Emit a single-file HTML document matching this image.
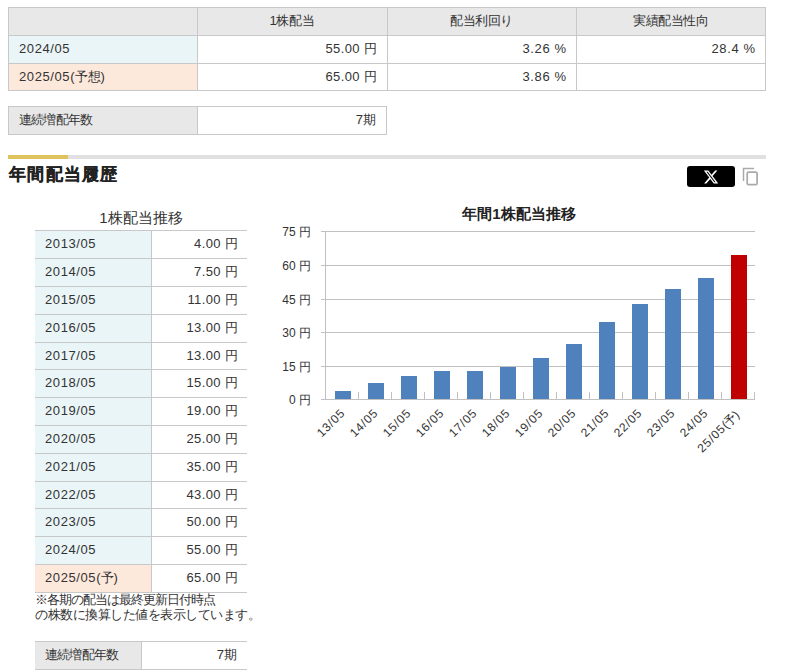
<!DOCTYPE html>
<html><head><meta charset="utf-8">
<style>
html,body{margin:0;padding:0;background:#fff;}
body{width:788px;height:672px;overflow:hidden;position:relative;font-family:"Liberation Sans",sans-serif;color:#333;font-size:13px;}
.a{position:absolute;}
.bx{position:absolute;box-sizing:border-box;}
.t{position:absolute;white-space:nowrap;line-height:16px;}
.r{text-align:right;}
.c{text-align:center;}
.n{letter-spacing:0.6px;}
.n4{letter-spacing:0.4px;}
.xl{transform-origin:100% 0;transform:rotate(-45deg);}
.hl{position:absolute;height:1px;background:#c8c8c8;}
.vl{position:absolute;width:1px;background:#c8c8c8;}
</style></head><body>

<!-- top table -->
<div class="a" style="left:8px;top:7px;width:758px;height:28px;background:#e8e8e8"></div>
<div class="a" style="left:8px;top:35px;width:189px;height:28px;background:#eaf5f8"></div>
<div class="a" style="left:8px;top:63px;width:189px;height:27px;background:#fde9dc"></div>
<div class="hl" style="left:8px;top:7px;width:758px"></div>
<div class="hl" style="left:8px;top:35px;width:758px"></div>
<div class="hl" style="left:8px;top:63px;width:758px"></div>
<div class="hl" style="left:8px;top:90px;width:758px"></div>
<div class="vl" style="left:8px;top:7px;height:84px"></div>
<div class="vl" style="left:197px;top:7px;height:84px"></div>
<div class="vl" style="left:387px;top:7px;height:84px"></div>
<div class="vl" style="left:576px;top:7px;height:84px"></div>
<div class="vl" style="left:765px;top:7px;height:84px"></div>
<div class="t c" style="left:197px;top:13px;width:190px"><span style="letter-spacing:-0.3px">1株配当</span></div>
<div class="t c" style="left:387px;top:13px;width:189px"><span style="letter-spacing:-0.5px">配当利回り</span></div>
<div class="t c" style="left:576px;top:13px;width:189px"><span style="letter-spacing:-0.5px">実績配当性向</span></div>
<div class="t" style="left:19px;top:41px"><span class="n">2024/05</span></div>
<div class="t" style="left:19px;top:69px"><span class="n">2025/05</span>(予想)</div>
<div class="t r" style="left:197px;top:41px;width:180px"><span class="n4">55.00 </span>円</div>
<div class="t r" style="left:387px;top:41px;width:179px"><span class="n">3.26 </span>%</div>
<div class="t r" style="left:576px;top:41px;width:179px"><span class="n">28.4 </span>%</div>
<div class="t r" style="left:197px;top:69px;width:180px"><span class="n4">65.00 </span>円</div>
<div class="t r" style="left:387px;top:69px;width:179px"><span class="n">3.86 </span>%</div>

<!-- second table -->
<div class="a" style="left:8px;top:106px;width:189px;height:28px;background:#e8e8e8"></div>
<div class="hl" style="left:8px;top:106px;width:379px"></div>
<div class="hl" style="left:8px;top:134px;width:379px"></div>
<div class="vl" style="left:8px;top:106px;height:29px"></div>
<div class="vl" style="left:197px;top:106px;height:29px"></div>
<div class="vl" style="left:386px;top:106px;height:29px"></div>
<div class="t" style="left:19px;top:112px;letter-spacing:-0.8px">連続増配年数</div>
<div class="t r" style="left:197px;top:112px;width:179px">7期</div>

<!-- divider -->
<div class="a" style="left:8px;top:155px;width:758px;height:4px;background:#e0e0e0"></div>
<div class="a" style="left:8px;top:155px;width:60px;height:4px;background:#dfc35e"></div>
<div class="t" style="left:9px;top:165px;font-size:17px;line-height:20px;font-weight:bold;color:#222;letter-spacing:1.3px;-webkit-text-stroke:0.25px #222">年間配当履歴</div>

<!-- X button -->
<div class="a" style="left:687px;top:166px;width:48px;height:21px;background:#000;border-radius:3px"></div>
<svg class="a" style="left:703px;top:169px" width="16" height="16" viewBox="0 0 24 24"><path fill="#fff" d="M18.244 2.25h3.308l-7.227 8.26 8.502 11.24H16.17l-5.214-6.817L4.99 21.75H1.68l7.73-8.835L1.254 2.25H8.08l4.713 6.231zm-1.161 17.52h1.833L7.084 4.126H5.117z"/></svg>
<svg class="a" style="left:742px;top:167px" width="18" height="20" viewBox="0 0 18 20"><path d="M1.5 14V1.5H12" fill="none" stroke="#aaa" stroke-width="1.5"/><rect x="5.2" y="5.2" width="9.9" height="12.5" rx="1.4" fill="none" stroke="#aaa" stroke-width="1.75"/></svg>

<div id="left"><div class="t c" style="left:35px;top:209px;width:212px;font-size:15px;line-height:18px">1株配当推移</div>
<div class="a" style="left:35px;top:231px;width:116px;height:27px;background:#eaf5f8"></div>
<div class="a" style="left:35px;top:259px;width:116px;height:27px;background:#eaf5f8"></div>
<div class="a" style="left:35px;top:287px;width:116px;height:27px;background:#eaf5f8"></div>
<div class="a" style="left:35px;top:315px;width:116px;height:27px;background:#eaf5f8"></div>
<div class="a" style="left:35px;top:343px;width:116px;height:26px;background:#eaf5f8"></div>
<div class="a" style="left:35px;top:370px;width:116px;height:27px;background:#eaf5f8"></div>
<div class="a" style="left:35px;top:398px;width:116px;height:27px;background:#eaf5f8"></div>
<div class="a" style="left:35px;top:426px;width:116px;height:27px;background:#eaf5f8"></div>
<div class="a" style="left:35px;top:454px;width:116px;height:27px;background:#eaf5f8"></div>
<div class="a" style="left:35px;top:482px;width:116px;height:26px;background:#eaf5f8"></div>
<div class="a" style="left:35px;top:509px;width:116px;height:27px;background:#eaf5f8"></div>
<div class="a" style="left:35px;top:537px;width:116px;height:27px;background:#eaf5f8"></div>
<div class="a" style="left:35px;top:565px;width:116px;height:27px;background:#fde9dc"></div>
<div class="hl" style="left:35px;top:230px;width:212px"></div>
<div class="hl" style="left:35px;top:258px;width:212px"></div>
<div class="hl" style="left:35px;top:286px;width:212px"></div>
<div class="hl" style="left:35px;top:314px;width:212px"></div>
<div class="hl" style="left:35px;top:342px;width:212px"></div>
<div class="hl" style="left:35px;top:369px;width:212px"></div>
<div class="hl" style="left:35px;top:397px;width:212px"></div>
<div class="hl" style="left:35px;top:425px;width:212px"></div>
<div class="hl" style="left:35px;top:453px;width:212px"></div>
<div class="hl" style="left:35px;top:481px;width:212px"></div>
<div class="hl" style="left:35px;top:508px;width:212px"></div>
<div class="hl" style="left:35px;top:536px;width:212px"></div>
<div class="hl" style="left:35px;top:564px;width:212px"></div>
<div class="hl" style="left:35px;top:592px;width:212px"></div>
<div class="vl" style="left:151px;top:230px;height:362px"></div>
<div class="t" style="left:45px;top:235.50px"><span class="n">2013/05</span></div>
<div class="t r" style="left:152px;top:235.50px;width:86px"><span class="n4">4.00 </span>円</div>
<div class="t" style="left:45px;top:263.50px"><span class="n">2014/05</span></div>
<div class="t r" style="left:152px;top:263.50px;width:86px"><span class="n4">7.50 </span>円</div>
<div class="t" style="left:45px;top:291.50px"><span class="n">2015/05</span></div>
<div class="t r" style="left:152px;top:291.50px;width:86px"><span class="n4">11.00 </span>円</div>
<div class="t" style="left:45px;top:319.50px"><span class="n">2016/05</span></div>
<div class="t r" style="left:152px;top:319.50px;width:86px"><span class="n4">13.00 </span>円</div>
<div class="t" style="left:45px;top:347.50px"><span class="n">2017/05</span></div>
<div class="t r" style="left:152px;top:347.50px;width:86px"><span class="n4">13.00 </span>円</div>
<div class="t" style="left:45px;top:374.50px"><span class="n">2018/05</span></div>
<div class="t r" style="left:152px;top:374.50px;width:86px"><span class="n4">15.00 </span>円</div>
<div class="t" style="left:45px;top:402.50px"><span class="n">2019/05</span></div>
<div class="t r" style="left:152px;top:402.50px;width:86px"><span class="n4">19.00 </span>円</div>
<div class="t" style="left:45px;top:430.50px"><span class="n">2020/05</span></div>
<div class="t r" style="left:152px;top:430.50px;width:86px"><span class="n4">25.00 </span>円</div>
<div class="t" style="left:45px;top:458.50px"><span class="n">2021/05</span></div>
<div class="t r" style="left:152px;top:458.50px;width:86px"><span class="n4">35.00 </span>円</div>
<div class="t" style="left:45px;top:486.50px"><span class="n">2022/05</span></div>
<div class="t r" style="left:152px;top:486.50px;width:86px"><span class="n4">43.00 </span>円</div>
<div class="t" style="left:45px;top:513.50px"><span class="n">2023/05</span></div>
<div class="t r" style="left:152px;top:513.50px;width:86px"><span class="n4">50.00 </span>円</div>
<div class="t" style="left:45px;top:541.50px"><span class="n">2024/05</span></div>
<div class="t r" style="left:152px;top:541.50px;width:86px"><span class="n4">55.00 </span>円</div>
<div class="t" style="left:45px;top:569.50px"><span class="n">2025/05</span>(予)</div>
<div class="t r" style="left:152px;top:569.50px;width:86px"><span class="n4">65.00 </span>円</div>
<div class="t" style="left:35px;top:592px;line-height:15px"><span style="letter-spacing:-1px">※各期の配当は最終更新日付時点</span><br><span style="letter-spacing:-0.5px">の株数に換算した値を表示しています。</span></div>
<div class="a" style="left:35px;top:642px;width:106px;height:27px;background:#e8e8e8"></div>
<div class="hl" style="left:35px;top:641px;width:212px"></div>
<div class="hl" style="left:35px;top:669px;width:212px"></div>
<div class="vl" style="left:141px;top:641px;height:29px"></div>
<div class="t" style="left:45px;top:647px;letter-spacing:-0.8px">連続増配年数</div>
<div class="t r" style="left:142px;top:647px;width:95px">7期</div></div><!--/left-->
<div id="chart"><svg class="a" style="left:0;top:0" width="788" height="672">
<line x1="321" y1="366.5" x2="755" y2="366.5" stroke="#c0c0c0" stroke-width="1"/>
<line x1="321" y1="332.5" x2="755" y2="332.5" stroke="#c0c0c0" stroke-width="1"/>
<line x1="321" y1="299.5" x2="755" y2="299.5" stroke="#c0c0c0" stroke-width="1"/>
<line x1="321" y1="265.5" x2="755" y2="265.5" stroke="#c0c0c0" stroke-width="1"/>
<line x1="321" y1="231.5" x2="755" y2="231.5" stroke="#c0c0c0" stroke-width="1"/>
<rect x="335" y="391.0" width="16" height="8.5" fill="#4f81bd"/>
<rect x="368" y="383.0" width="16" height="16.5" fill="#4f81bd"/>
<rect x="401" y="376.0" width="16" height="23.5" fill="#4f81bd"/>
<rect x="434" y="371.0" width="16" height="28.5" fill="#4f81bd"/>
<rect x="467" y="371.0" width="16" height="28.5" fill="#4f81bd"/>
<rect x="500" y="367.0" width="16" height="32.5" fill="#4f81bd"/>
<rect x="533" y="358.0" width="16" height="41.5" fill="#4f81bd"/>
<rect x="566" y="344.0" width="16" height="55.5" fill="#4f81bd"/>
<rect x="599" y="322.0" width="16" height="77.5" fill="#4f81bd"/>
<rect x="632" y="304.0" width="16" height="95.5" fill="#4f81bd"/>
<rect x="665" y="289.0" width="16" height="110.5" fill="#4f81bd"/>
<rect x="698" y="278.0" width="16" height="121.5" fill="#4f81bd"/>
<rect x="731" y="255.0" width="16" height="144.5" fill="#c00000"/>
<line x1="321" y1="399.5" x2="755" y2="399.5" stroke="#c0c0c0" stroke-width="1"/>
<line x1="325.5" y1="231.5" x2="325.5" y2="399.5" stroke="#c0c0c0" stroke-width="1"/>
<line x1="358.5" y1="392" x2="358.5" y2="399.5" stroke="#c0c0c0" stroke-width="1"/>
<line x1="391.5" y1="392" x2="391.5" y2="399.5" stroke="#c0c0c0" stroke-width="1"/>
<line x1="424.5" y1="392" x2="424.5" y2="399.5" stroke="#c0c0c0" stroke-width="1"/>
<line x1="457.5" y1="392" x2="457.5" y2="399.5" stroke="#c0c0c0" stroke-width="1"/>
<line x1="490.5" y1="392" x2="490.5" y2="399.5" stroke="#c0c0c0" stroke-width="1"/>
<line x1="523.5" y1="392" x2="523.5" y2="399.5" stroke="#c0c0c0" stroke-width="1"/>
<line x1="556.5" y1="392" x2="556.5" y2="399.5" stroke="#c0c0c0" stroke-width="1"/>
<line x1="589.5" y1="392" x2="589.5" y2="399.5" stroke="#c0c0c0" stroke-width="1"/>
<line x1="622.5" y1="392" x2="622.5" y2="399.5" stroke="#c0c0c0" stroke-width="1"/>
<line x1="655.5" y1="392" x2="655.5" y2="399.5" stroke="#c0c0c0" stroke-width="1"/>
<line x1="688.5" y1="392" x2="688.5" y2="399.5" stroke="#c0c0c0" stroke-width="1"/>
<line x1="721.5" y1="392" x2="721.5" y2="399.5" stroke="#c0c0c0" stroke-width="1"/>
<line x1="754.5" y1="392" x2="754.5" y2="399.5" stroke="#c0c0c0" stroke-width="1"/>
</svg>
<div class="t r" style="left:270px;top:391.5px;width:41px;font-size:12px;line-height:16px">0 円</div>
<div class="t r" style="left:270px;top:358.5px;width:41px;font-size:12px;line-height:16px">15 円</div>
<div class="t r" style="left:270px;top:324.5px;width:41px;font-size:12px;line-height:16px">30 円</div>
<div class="t r" style="left:270px;top:291.5px;width:41px;font-size:12px;line-height:16px">45 円</div>
<div class="t r" style="left:270px;top:257.5px;width:41px;font-size:12px;line-height:16px">60 円</div>
<div class="t r" style="left:270px;top:223.5px;width:41px;font-size:12px;line-height:16px">75 円</div>
<div class="t xl" style="right:450.0px;top:406px;font-size:12px;line-height:14px;letter-spacing:0.8px">13/05</div>
<div class="t xl" style="right:417.0px;top:406px;font-size:12px;line-height:14px;letter-spacing:0.8px">14/05</div>
<div class="t xl" style="right:384.0px;top:406px;font-size:12px;line-height:14px;letter-spacing:0.8px">15/05</div>
<div class="t xl" style="right:351.0px;top:406px;font-size:12px;line-height:14px;letter-spacing:0.8px">16/05</div>
<div class="t xl" style="right:318.0px;top:406px;font-size:12px;line-height:14px;letter-spacing:0.8px">17/05</div>
<div class="t xl" style="right:285.0px;top:406px;font-size:12px;line-height:14px;letter-spacing:0.8px">18/05</div>
<div class="t xl" style="right:252.0px;top:406px;font-size:12px;line-height:14px;letter-spacing:0.8px">19/05</div>
<div class="t xl" style="right:219.0px;top:406px;font-size:12px;line-height:14px;letter-spacing:0.8px">20/05</div>
<div class="t xl" style="right:186.0px;top:406px;font-size:12px;line-height:14px;letter-spacing:0.8px">21/05</div>
<div class="t xl" style="right:153.0px;top:406px;font-size:12px;line-height:14px;letter-spacing:0.8px">22/05</div>
<div class="t xl" style="right:120.0px;top:406px;font-size:12px;line-height:14px;letter-spacing:0.8px">23/05</div>
<div class="t xl" style="right:87.0px;top:406px;font-size:12px;line-height:14px;letter-spacing:0.8px">24/05</div>
<div class="t xl" style="right:55.5px;top:407.5px;font-size:12px;line-height:14px;letter-spacing:0.8px">25/05<span style="letter-spacing:-0.3px">(予)</span></div>
<div class="t c" style="left:419px;top:205px;width:200px;font-size:15px;line-height:18px;font-weight:bold;color:#222">年間1株配当推移</div></div><!--/chart-->
</body></html>
